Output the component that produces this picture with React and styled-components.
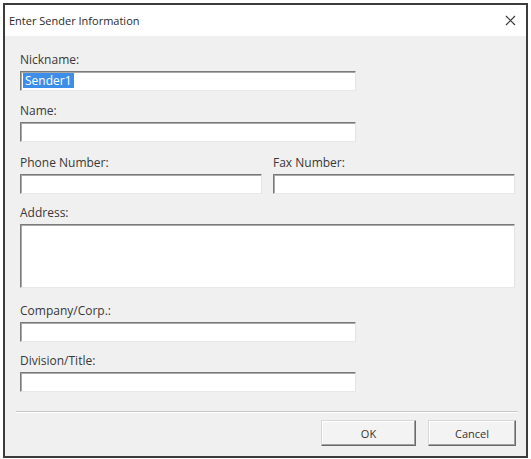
import styled, { createGlobalStyle } from 'styled-components';

const Global = createGlobalStyle`
  html, body {
    margin: 0;
    padding: 0;
    background: #ffffff;
  }
  body {
    font-family: "Open Sans", "Noto Sans", sans-serif;
  }
`;

const Window = styled.div`
  margin: 3px 0 0 3px;
  width: 525px;
  height: 455px;
  box-sizing: border-box;
  border: 2px solid #3c3c3c;
  display: flex;
  flex-direction: column;
  background: #f0f0f0;
`;

const TitleBar = styled.div`
  height: 31px;
  background: #ffffff;
  display: flex;
  align-items: center;
  justify-content: space-between;
  padding: 0 10px 0 4px;
`;

const Title = styled.span`
  font-size: 11px;
  color: #2a2a2a;
`;

const Body = styled.div`
  flex: 1;
  display: flex;
  flex-direction: column;
  padding: 16px 0 0 15px;
`;

const Field = styled.div`
  display: flex;
  flex-direction: column;
  gap: 3px;
  margin-top: ${(p) => p.$mt || 0}px;
`;

const Label = styled.label`
  font-size: 12px;
  line-height: 16px;
  color: #383838;
`;

const Input = styled.div`
  box-sizing: border-box;
  width: ${(p) => p.$w}px;
  height: ${(p) => p.$h || 20}px;
  background: #ffffff;
  border-style: solid;
  border-width: 1px;
  border-color: #7a7a7a #e4e4e4 #e8e8e8 #7a7a7a;
  box-shadow: inset 1px 1px 0 #a8a8a8;
  padding: 1px 0 0 2px;
  display: flex;
  align-items: flex-start;
`;

const Selected = styled.span`
  background: #3d8ee8;
  color: #ffffff;
  font-size: 12px;
  line-height: 15px;
  padding: 0 2px;
`;

const Row = styled.div`
  display: grid;
  grid-template-columns: 242px 242px;
  column-gap: 11px;
  margin-top: 13px;
`;

const Separator = styled.div`
  height: 1px;
  background: #c8c8c8;
  border-bottom: 1px solid #ffffff;
  margin: 19px 8px 0 -4px;
`;

const Buttons = styled.div`
  display: flex;
  justify-content: flex-end;
  gap: 12px;
  margin: 7px 10px 0 0;
`;

const Button = styled.button`
  width: ${(p) => p.$w}px;
  height: 26px;
  box-sizing: border-box;
  background: #f3f3f3;
  border-style: solid;
  border-width: 1px;
  border-color: #d8d8d8 #6a6a6a #6a6a6a #d8d8d8;
  box-shadow: inset -1px -1px 0 #a0a0a0, inset 1px 1px 0 #ffffff;
  font-family: "Open Sans", "Noto Sans", sans-serif;
  font-size: 11px;
  color: #333333;
  padding: 0;
`;

const Close = () => (
  <svg width="11" height="11" viewBox="0 0 11 11">
    <path d="M1 1 L10 10 M10 1 L1 10" stroke="#3a3a3a" strokeWidth="1.2" fill="none" />
  </svg>
);

export default function App() {
  return (
    <>
      <Global />
      <Window>
        <TitleBar>
          <Title>Enter Sender Information</Title>
          <Close />
        </TitleBar>
        <Body>
          <Field>
            <Label>Nickname:</Label>
            <Input $w={336}>
              <Selected>Sender1</Selected>
            </Input>
          </Field>
          <Field $mt={12}>
            <Label>Name:</Label>
            <Input $w={336} />
          </Field>
          <Row>
            <Field>
              <Label>Phone Number:</Label>
              <Input $w={242} />
            </Field>
            <Field>
              <Label>Fax Number:</Label>
              <Input $w={242} />
            </Field>
          </Row>
          <Field $mt={11}>
            <Label>Address:</Label>
            <Input $w={495} $h={64} />
          </Field>
          <Field $mt={15}>
            <Label>Company/Corp.:</Label>
            <Input $w={336} />
          </Field>
          <Field $mt={11}>
            <Label>Division/Title:</Label>
            <Input $w={336} />
          </Field>
          <Separator />
          <Buttons>
            <Button $w={95}>OK</Button>
            <Button $w={88}>Cancel</Button>
          </Buttons>
        </Body>
      </Window>
    </>
  );
}
